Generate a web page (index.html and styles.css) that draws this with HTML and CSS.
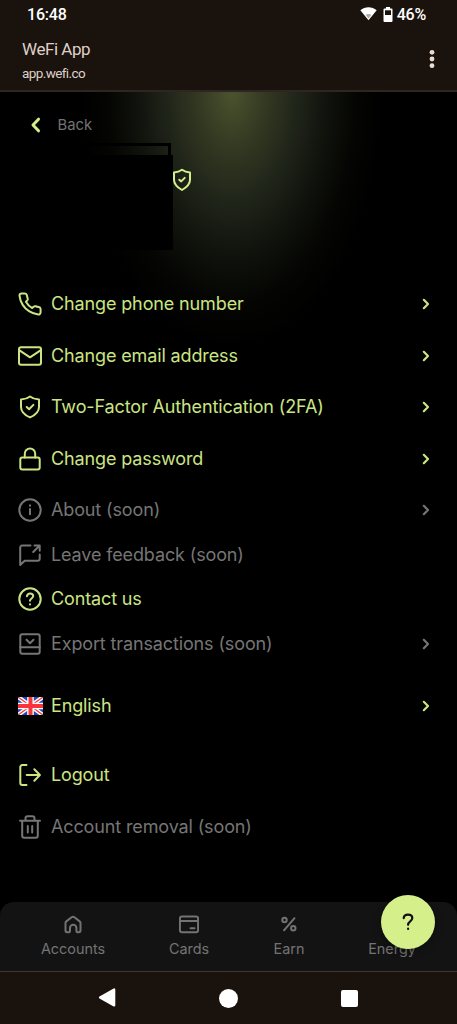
FILE: index.html
```html
<!DOCTYPE html>
<html lang="en">
<head>
<meta charset="utf-8">
<title>WeFi App</title>
<link rel="stylesheet" href="styles.css">
</head>
<body>
<svg class="defs" width="0" height="0">
  <symbol id="chevron" viewBox="0 0 10 14"><path d="M2.800 2.800 7 7 2.800 11.200" stroke-width="2.200"/></symbol>
  <symbol id="shield" viewBox="0 0 24 24"><path d="M12 1.700c2.500 1.800 5.300 2.500 8 2.700v7.300c0 4.400-3.500 7.700-8 10.300-4.500-2.600-8-5.900-8-10.300V4.400c2.700-.2 5.500-.9 8-2.700zM9.300 11.700l1.900 1.700 3.500-3.500"/></symbol>
</svg>
<div class="screen">
  <header class="top">
    <div class="status">
      <span class="clock">16:48</span>
      <span class="indicators">
        <svg class="wifi" width="17" height="15" viewBox="0 0 17 15"><path d="M.3 4.300C5 .1 12 .1 16.700 4.300L8.500 14.300z" fill="#fff"/><path d="M5.600 8.800q2.900-1.500 5.800 0L8.500 12.500z" fill="#aaa"/></svg>
        <svg class="battery" width="10" height="15" viewBox="0 0 10 15"><path d="M3 0h4v1.500h1.500q1 0 1 1V14q0 1-1 1h-7q-1 0-1-1V2.500q0-1 1-1H3z" fill="#fff"/><path d="M2 3.300h6v4.700H2z" fill="#1a120d"/></svg>
        <span class="percent">46%</span>
      </span>
    </div>
    <div class="appbar">
      <div class="titles"><div class="title">WeFi App</div><div class="url">app.wefi.co</div></div>
      <svg class="more" width="6" height="20" viewBox="0 0 6 20"><circle cx="3" cy="3.300" r="2.400"/><circle cx="3" cy="10" r="2.400"/><circle cx="3" cy="16.700" r="2.400"/></svg>
    </div>
  </header>
  <main class="content">
    <div class="back">
      <svg class="line" width="12" height="18" viewBox="0 0 12 18"><path d="M8.500 3.200 3 9l5.500 5.800" stroke-width="3"/></svg>
      <span>Back</span>
    </div>
    <div class="profile">
      <div class="identity"><div class="tab"></div><div class="block"></div></div>
      <svg class="line verified" width="24" height="24" viewBox="0 0 24 24"><use href="#shield"/></svg>
    </div>
    <nav class="menu">
      <div class="group">
        <div class="row"><svg class="line" viewBox="0 0 24 24"><path d="M22.600 17.100v3.200a2.200 2.200 0 0 1-2.400 2.200 21 21 0 0 1-9.200-3.300 20.800 20.800 0 0 1-6.300-6.300A21 21 0 0 1 1.500 3.700 2.200 2.200 0 0 1 3.600 1.500h3.200a2.200 2.200 0 0 1 2.100 1.800c.1 1.100.4 2 .8 3a2.200 2.200 0 0 1-.5 2.200L7.900 9.800a17 17 0 0 0 6.300 6.300l1.400-1.300a2.200 2.200 0 0 1 2.200-.5c1 .4 1.900.6 3 .8a2.200 2.200 0 0 1 1.800 2z"/></svg><span>Change phone number</span><svg class="line go"><use href="#chevron"/></svg></div>
        <div class="row"><svg class="line" viewBox="0 0 24 24"><rect x="1" y="3.300" width="22" height="17.500" rx="2"/><path d="m1.500 6.300 10.500 7 10.500-7"/></svg><span>Change email address</span><svg class="line go"><use href="#chevron"/></svg></div>
        <div class="row"><svg class="line" viewBox="0 0 24 24"><path d="M12 1.500c2.400 1.900 5.800 2.800 9 3.100v7.300c0 4.700-3.800 8.200-9 10.500-5.200-2.300-9-5.800-9-10.500V4.600c3.200-.3 6.600-1.200 9-3.100zM8.700 12l2.400 2.300 4.300-4.400"/></svg><span>Two-Factor Authentication (2FA)</span><svg class="line go"><use href="#chevron"/></svg></div>
        <div class="row"><svg class="line" viewBox="0 0 24 24"><rect x="2.300" y="10.600" width="19.400" height="12" rx="2"/><path d="M6.800 10.600V6.700a5.200 5.200 0 0 1 10.400 0v3.900"/></svg><span>Change password</span><svg class="line go"><use href="#chevron"/></svg></div>
      </div>
      <div class="group tight">
        <div class="row muted"><svg class="line" viewBox="0 0 24 24"><circle cx="12" cy="12" r="10.700"/><path d="M12 11v5.300M12 7.300v.5"/></svg><span>About (soon)</span><svg class="line go"><use href="#chevron"/></svg></div>
        <div class="row muted"><svg class="line" viewBox="0 0 24 24"><path d="M12.500 2.500H4.200a2 2 0 0 0-2 2V22l4.500-4.300h13a2 2 0 0 0 2-2v-4.200M16.500 2.500h5.200v5.200M21.500 2.700 15.200 9"/></svg><span>Leave feedback (soon)</span></div>
        <div class="row"><svg class="line" viewBox="0 0 24 24"><circle cx="12" cy="12" r="10.700"/><path d="M8.900 9.200c.4-2 1.500-2.800 3.200-2.800 1.900 0 3.100 1.100 3.100 2.700 0 2.200-3.200 2.600-3.200 4.700M12 17.200v.4"/></svg><span>Contact us</span></div>
        <div class="row muted"><svg class="line" viewBox="0 0 24 24"><rect x="2.300" y="2.300" width="19.400" height="19.400" rx="2"/><path d="M2.300 15.200h19.400M8.500 7.700l3.500 3.500 3.500-3.500"/></svg><span>Export transactions (soon)</span><svg class="line go"><use href="#chevron"/></svg></div>
      </div>
      <div class="group language">
        <div class="row"><svg class="flag" viewBox="0 0 25 18"><clipPath id="flag-clip"><rect width="25" height="18" rx="2"/></clipPath><g clip-path="url(#flag-clip)"><path fill="#1f49b6" d="M0 0h25v18H0z"/><path d="m0 0 25 18M25 0 0 18" stroke="#fff" stroke-width="4.200"/><path d="m0 0 25 18M25 0 0 18" stroke="#f9353b" stroke-width="1.300"/><path d="M12.500 0v18M0 9h25" stroke="#fff" stroke-width="6.600"/><path d="M12.500 0v18M0 9h25" stroke="#f9353b" stroke-width="4"/></g></svg><span>English</span><svg class="line go"><use href="#chevron"/></svg></div>
      </div>
      <div class="group account">
        <div class="row"><svg class="line" viewBox="0 0 24 24"><path d="M8.500 2H4.300a2 2 0 0 0-2 2v16a2 2 0 0 0 2 2h4.200M8.700 12h13M16.300 6.300 21.900 12l-5.600 5.700"/></svg><span>Logout</span></div>
        <div class="row muted"><svg class="line" viewBox="0 0 24 24"><path d="M2 5.800h20M7.500 5.800V3.300a2 2 0 0 1 2-2h5a2 2 0 0 1 2 2v2.500M4.200 5.800V20.700a2 2 0 0 0 2 2h11.600a2 2 0 0 0 2-2V5.800M9.800 11v6.500M14.200 11v6.500"/></svg><span>Account removal (soon)</span></div>
      </div>
    </nav>
  </main>
  <footer class="tabs">
    <div class="tab-item accounts"><svg class="line" width="20" height="20" viewBox="0 0 20 20"><path d="M2.500 8q0-1 .8-1.600l5.300-4.200q1.400-1 2.800 0l5.300 4.200q.8.600.8 1.600v7.500q0 1.700-1.700 1.700h-1.200q-1.200 0-1.200-1.200V13a3.200 3.200 0 0 0-6.400 0v3q0 1.200-1.200 1.200H4.200q-1.700 0-1.700-1.700z"/></svg><span>Accounts</span></div>
    <div class="tab-item cards"><svg class="line" width="20" height="20" viewBox="0 0 20 20"><rect x=".9" y="1.600" width="18.200" height="15.600" rx="2"/><path d="M1 6h18M11.500 13.300h4"/></svg><span>Cards</span></div>
    <div class="tab-item earn"><svg class="line" width="20" height="20" viewBox="0 0 20 20"><circle cx="5.500" cy="5" r="2.200"/><circle cx="14.300" cy="13.300" r="2.200"/><path d="M15.500 3.200 5 15.300"/></svg><span>Earn</span></div>
    <div class="tab-item energy"><i></i><span>Energy</span></div>
    <div class="help"><svg width="20" height="22" viewBox="0 0 20 22"><path d="M5.700 7.200C5.900 4.900 7.500 3.700 10 3.700c2.700 0 4.300 1.300 4.300 3.400 0 3.300-4.200 3.300-4.200 6.700M10.100 17.700v.2"/></svg></div>
  </footer>
  <div class="system">
    <svg width="20" height="22" viewBox="0 0 20 22"><path d="M17.200 2.500v16L3 10.500z" fill="#fff" stroke="#fff" stroke-width="2.200" stroke-linejoin="round"/></svg>
    <span class="home"></span>
    <span class="recent"></span>
  </div>
</div>
</body>
</html>
```

FILE: styles.css
```css
* { box-sizing: border-box; }
body { margin: 0; background: #000; font-family: Inter, sans-serif; }
svg { display: block; flex: none; }
.defs { position: absolute; }
.line { fill: none; stroke: currentColor; stroke-width: 2; stroke-linecap: round; stroke-linejoin: round; }
.screen { width: 457px; height: 1024px; display: flex; flex-direction: column; overflow: hidden; }

.top { height: 92px; background: #1a120d; border-bottom: 2px solid #302621; flex: none; }
.status { height: 30px; padding: 0 31px 0 27px; display: flex; justify-content: space-between; align-items: center; color: #fff; font: 500 16px/30px Roboto, sans-serif; }
.clock { letter-spacing: -.2px; }
.percent { letter-spacing: -.2px; }
.indicators { display: flex; align-items: center; }
.wifi { margin-right: 6px; margin-top: -3px; }
.battery { margin-right: 4px; margin-top: -2px; }
.appbar { height: 58px; padding: 0 22px; display: flex; justify-content: space-between; align-items: center; color: #dfd0c7; font-family: Roboto, sans-serif; }
.title { font-size: 17px; line-height: 22px; margin-top: 2px; letter-spacing: -.45px; }
.url { font-size: 13.500px; line-height: 18px; margin-top: 4px; letter-spacing: -.6px; }
.more { fill: #ebdcd2; }

.content { height: 810px; flex: none; background: radial-gradient(ellipse 150px 255px at 232px 0, #4a532e 0%, #363b23 20%, #20251a 43%, #10120c 64%, #050603 82%, #000 100%); }
.back { height: 51px; padding: 15px 0 0 30px; display: flex; align-items: center; gap: 15.500px; color: #737373; font: 14.800px/20px Inter, sans-serif; }
.back svg { color: #d4f089; }
.profile { height: 148px; display: flex; }
.identity { width: 173px; height: 107px; display: flex; flex-direction: column; }
.tab { width: 171px; height: 12px; border: solid #000; border-width: 3px 3px 0 0; }
.block { height: 95px; background: #000; }
.verified { color: #d4f089; margin: 25px 0 0 -3px; }

.menu { padding: 0 26px 0 18px; color: #cbe583; }
.group { display: flex; flex-direction: column; gap: 25.500px; }
.tight { gap: 18.500px; margin-top: 25.500px; }
.language { margin-top: 36px; }
.account { margin-top: 43.500px; }
.row { height: 26px; display: flex; align-items: center; gap: 9px; font-size: 18px; line-height: 26px; letter-spacing: -.13px; white-space: nowrap; }
.row > svg { width: 24px; height: 24px; }
.row > .flag { width: 25px; height: 18px; margin: 0 -1px 0 0; }
.row > .go { width: 10px; height: 14px; margin-left: auto; }
.muted { color: #757575; }

.tabs { position: relative; height: 69px; flex: none; background: #131313; border-radius: 14px 14px 0 0; display: flex; color: #737373; font-size: 14.400px; line-height: 18px; }
.tab-item { display: flex; flex-direction: column; align-items: center; padding-top: 13px; gap: 5px; }
.tab-item svg, .tab-item i { height: 20px; }
.accounts { width: 146px; }
.cards { width: 86px; }
.earn { width: 114px; }
.energy { width: 92px; }
.help { position: absolute; left: 381px; top: -7px; width: 54px; height: 54px; border-radius: 50%; background: #d5f08a; box-shadow: 0 3px 10px #0005; display: grid; place-items: center; }
.help svg { fill: none; stroke: #111; stroke-width: 2.200; stroke-linecap: round; }

.system { height: 53px; flex: none; background: #1a120d; border-top: 1px solid #40342e; display: flex; align-items: center; padding-left: 97px; }
.home { width: 19px; height: 19px; border-radius: 50%; background: #fff; margin-left: 102px; }
.recent { width: 17px; height: 17px; border-radius: 2px; background: #fff; margin-left: 103px; }
```
